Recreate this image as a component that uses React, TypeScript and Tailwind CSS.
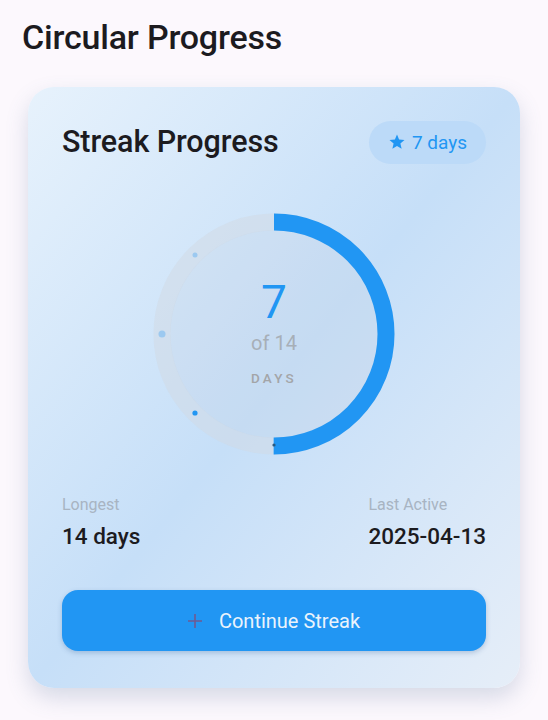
import React from "react";

export default function App() {
  const cx = 130;
  const cy = 130;
  const r = 112;
  const circ = 2 * Math.PI * r;
  const progress = 7 / 14;
  return (
    <div
      className="min-h-[720px] w-full bg-[#fcf8fd] text-[#1c1b1f]"
      style={{ fontFamily: "Roboto, 'Noto Sans', sans-serif" }}
    >
      <div className="px-[22px] pt-[15px]">
        <h1 className="text-[34px] font-medium leading-[44px] tracking-[-0.2px]">Circular Progress</h1>
      </div>
      <div className="px-[28px] pt-[28px]">
        <div className="rounded-[26px] bg-gradient-to-br from-[#e7f2fc] via-[#c6dff8] to-[#e6eef8] px-[34px] pt-[33px] pb-[37px] shadow-[0_10px_22px_rgba(80,110,150,0.22)]">
          <div className="flex items-center justify-between">
            <h2 className="text-[30.5px] font-medium leading-[44px] tracking-[-0.1px]">Streak Progress</h2>
            <div className="flex h-[43px] items-center gap-[6px] rounded-full bg-[#bcdaf8] px-[19px] text-[#2196f3]">
              <svg width="18" height="18" viewBox="0 0 24 24" fill="#2196f3">
                <path d="M12 17.27L18.18 21l-1.64-7.03L22 9.24l-7.19-.61L12 2 9.19 8.63 2 9.24l5.46 4.73L5.82 21z" />
              </svg>
              <span className="text-[19px] leading-none">7 days</span>
            </div>
          </div>

          <div className="mt-[40px] flex justify-center">
            <div className="relative h-[260px] w-[260px]">
              <svg width="260" height="260" viewBox="0 0 260 260" className="absolute inset-0">
                <circle cx={cx} cy={cy} r={r - 8} fill="rgba(190,200,210,0.16)" />
                <circle cx={cx} cy={cy} r={r} fill="none" stroke="rgba(210,218,228,0.5)" strokeWidth="17" />
                <circle
                  cx={cx}
                  cy={cy}
                  r={r}
                  fill="none"
                  stroke="#2196f3"
                  strokeWidth="17"
                  strokeDasharray={`${circ * progress} ${circ}`}
                  transform={`rotate(-90 ${cx} ${cy})`}
                />
                <circle cx={cx - 79} cy={cy - 79} r="2.5" fill="#8ec3f0" opacity="0.8" />
                <circle cx={cx - 112} cy={cy} r="3.5" fill="#8ec3f0" opacity="0.8" />
                <circle cx={cx - 79} cy={cy + 79} r="2.6" fill="#2196f3" />
                <circle cx={cx} cy={cy + 111} r="1.6" fill="#2a5a80" />
              </svg>
              <div className="absolute inset-0 flex flex-col items-center justify-center pb-[4px]">
                <span className="text-[46px] leading-[48px] text-[#2196f3]">7</span>
                <span className="mt-[4px] text-[20px] leading-[26px] text-[#a7afb8]">of 14</span>
                <span className="mt-[14px] text-[13.5px] font-medium leading-[16px] tracking-[3.2px] text-[#a3a5a8]">DAYS</span>
              </div>
            </div>
          </div>

          <div className="mt-[31px] flex items-start justify-between">
            <div className="flex flex-col items-start">
              <span className="text-[16px] leading-[20px] text-[#a8b4c2]">Longest</span>
              <span className="mt-[7px] text-[22.5px] font-medium leading-[28px]">14 days</span>
            </div>
            <div className="flex flex-col items-start">
              <span className="text-[16px] leading-[20px] text-[#a8b4c2]">Last Active</span>
              <span className="mt-[7px] text-[22.5px] font-medium leading-[28px]">2025-04-13</span>
            </div>
          </div>

          <button className="mt-[40px] flex h-[61px] w-full items-center justify-center gap-[17px] rounded-[16px] bg-[#2196f3] shadow-[0_2px_5px_rgba(30,80,140,0.25)]">
            <svg width="14" height="14" viewBox="0 0 14 14">
              <path d="M7 0v14M0 7h14" stroke="#6f5a92" strokeWidth="1.6" />
            </svg>
            <span className="text-[20px] leading-none text-[#eaf3fc]">Continue Streak</span>
          </button>
        </div>
      </div>
    </div>
  );
}
